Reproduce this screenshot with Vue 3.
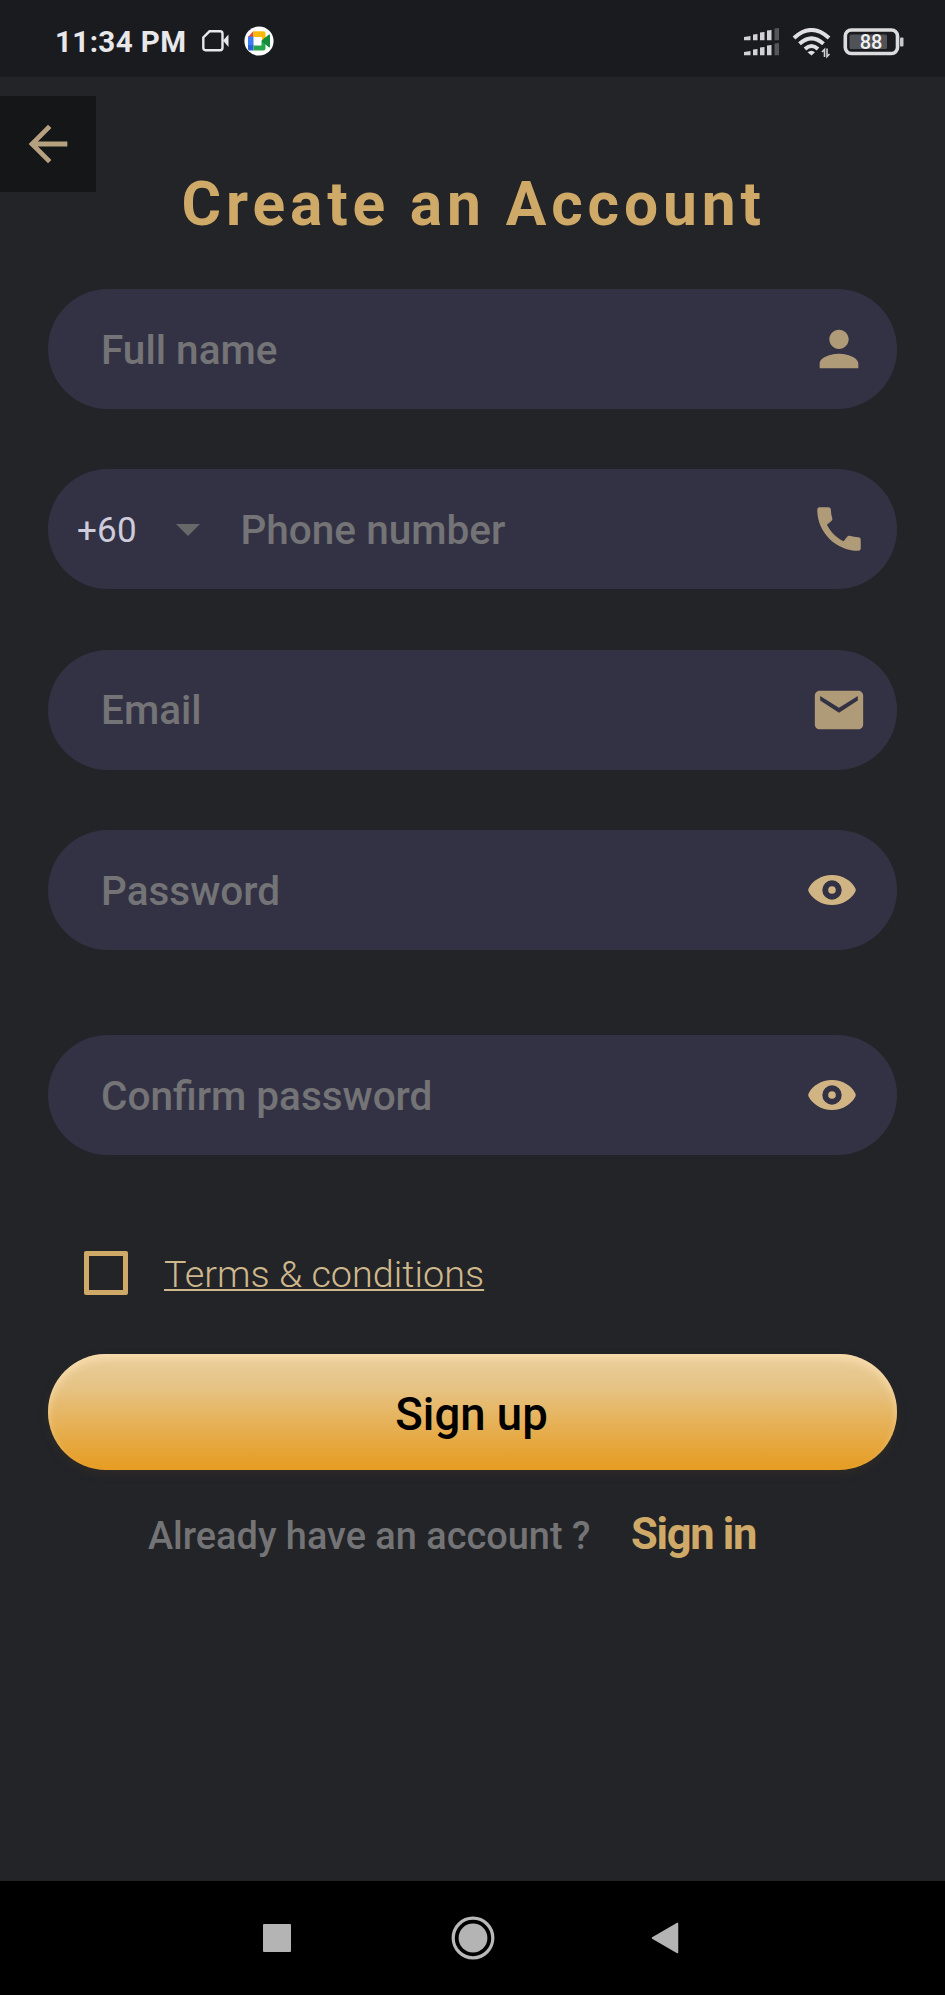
<script setup>
const fields = [
  { key: 'name', label: 'Full name', icon: 'person' },
  { key: 'phone', label: 'Phone number', icon: 'phone', prefix: '+60' },
  { key: 'email', label: 'Email', icon: 'mail' },
  { key: 'password', label: 'Password', icon: 'eye' },
  { key: 'confirm', label: 'Confirm password', icon: 'eye' },
]
const glyphs = {
  person: 'M12 12c2.21 0 4-1.79 4-4s-1.79-4-4-4-4 1.79-4 4 1.79 4 4 4zm0 2c-2.67 0-8 1.34-8 4v2h16v-2c0-2.66-5.33-4-8-4z',
  phone: 'M20.01 15.38c-1.23 0-2.42-.2-3.53-.56-.35-.12-.74-.03-1.01.24l-1.57 1.97c-2.83-1.35-5.48-3.9-6.89-6.83l1.95-1.66c.27-.28.35-.67.24-1.02-.37-1.11-.56-2.3-.56-3.53 0-.54-.45-.99-.99-.99H4.19C3.65 3 3 3.24 3 3.99 3 13.28 10.73 21 20.01 21c.71 0 .99-.63.99-1.18v-3.45c0-.54-.45-.99-.99-.99z',
  mail: 'M20 4H4c-1.1 0-2 .9-2 2v12c0 1.1.9 2 2 2h16c1.1 0 2-.9 2-2V6c0-1.1-.9-2-2-2zm-.2 4.100l-7.800 5-7.800-5V6.200l7.800 4.900 7.800-4.900z',
}
</script>

<template>
  <div class="screen">
    <header class="status">
      <span class="time">11:34 PM</span>
      <svg class="cam" width="28" height="22" viewBox="0 0 28 22">
        <path d="M7.5 1.3H18Q20.5 1.3 20.5 3.8V17.7Q20.5 20.2 18 20.2H3.5Q1.3 20.2 1.3 17.7V7.5Z" fill="none" stroke="#e8e8ea" stroke-width="2.4" />
        <path d="M21 10.5L26.5 4.5V17Z" fill="#e8e8ea" />
      </svg>
      <svg class="meet" width="30" height="30" viewBox="0 0 30 30">
        <circle cx="15" cy="15" r="14.6" fill="#fff" />
        <path d="M4 11L9.5 5V11Z" fill="#e94335" />
        <path d="M4 10.5H9.5V19.5H4Z" fill="#3b7df0" />
        <path d="M4 19H9.5V24.5H5.5Q4 24.5 4 23Z" fill="#2864d8" />
        <path d="M9.5 5.3H19.5Q21.5 5.3 21.5 7V12L18 15V11H9.5Z" fill="#fbb90b" />
        <path d="M9.5 19.5H17.5V15L21.5 11V22.5Q21.5 24.5 19.5 24.5H9.5Z" fill="#27a54c" />
        <path d="M17.5 15L24.5 8.7Q26 8 26 9.5V20.5Q26 22 24.5 21Z" fill="#138a3d" />
      </svg>
      <svg class="tray" width="165" height="32" viewBox="0 0 165 32">
        <g fill="#d2d2d4">
          <path d="M1 9L7.500 8V12.300H1ZM10 6.500L14.500 6V12.300H10ZM17 4.500L21.500 4V12.300H17ZM24 2.500L28.500 2V12.300H24Z" />
          <path d="M1 24L7.500 23V27.300H1ZM10 21.500L14.500 21V27.300H10ZM17 19.500L21.500 19V27.300H17ZM24 17.500L28.500 17V27.300H24Z" />
          <path d="M31.500 .5L36 0V12.300H31.500ZM31.500 15.500L36 15V27.300H31.500Z" fill="#55565a" />
        </g>
        <g fill="none" stroke="#e0e0e2" stroke-width="4">
          <path d="M51 10Q68.500 -6 86 10" />
          <path d="M56.500 15.800Q68.500 5 80.500 15.800" />
          <path d="M62 21Q68.500 15 75 21" />
        </g>
        <path d="M64.500 24.300Q68.500 21.300 72 24.300L68.500 27.500Z" fill="#e0e0e2" />
        <path d="M79 24L81.500 21.500V29M84 20.500V28.500L86.500 26" fill="none" stroke="#d2d2d4" stroke-width="1.600" />
        <rect x="102.300" y="2" width="52.200" height="23.500" rx="6" fill="none" stroke="#dcdcde" stroke-width="3.600" />
        <rect x="106.500" y="6.500" width="37.500" height="14.500" rx="1.500" fill="#515257" />
        <rect x="157" y="9.500" width="3.500" height="9" rx="1" fill="#c8c8ca" />
        <text x="128" y="21" text-anchor="middle" class="level">88</text>
      </svg>
    </header>

    <div class="top">
      <div class="back">
        <svg width="58" height="58" viewBox="0 0 24 24"><path d="M20 11H7.830l5.590-5.590L12 4l-8 8 8 8 1.410-1.410L7.830 13H20v-2z" fill="#b5a180" /></svg>
      </div>
      <h1 class="title">Create an Account</h1>
    </div>

    <main class="form">
      <div v-for="f in fields" :key="f.key" class="field" :class="f.key">
        <template v-if="f.prefix">
          <span class="prefix">{{ f.prefix }}</span>
          <svg class="caret" width="24" height="12" viewBox="0 0 24 12"><path d="M0 0H24L12 12Z" fill="#68686b" /></svg>
        </template>
        <span class="label">{{ f.label }}</span>
        <svg v-if="f.icon === 'eye'" class="eye" width="48" height="30" viewBox="0 0 48 30">
          <path fill-rule="evenodd" d="M24 0C13 0 4.500 6 .7 13.200Q-.2 15 .7 16.800C4.500 24 13 30 24 30S43.500 24 47.300 16.800Q48.200 15 47.300 13.200C43.500 6 35 0 24 0ZM24 5.300A9.700 9.700 0 1 1 24 24.700A9.700 9.700 0 1 1 24 5.300ZM24 11.200A3.800 3.800 0 1 0 24 18.800A3.800 3.800 0 1 0 24 11.200Z" fill="#d0b483" />
        </svg>
        <svg v-else class="icon" width="58" height="58" viewBox="0 0 24 24"><path :d="glyphs[f.icon]" fill="#b09b78" /></svg>
      </div>

      <div class="terms">
        <span class="box"></span>
        <span class="terms-text">Terms &amp; conditions</span>
      </div>

      <div class="signup"><span>Sign up</span></div>

      <div class="signin">
        <span class="question">Already have an account ?</span>
        <span class="link">Sign in</span>
      </div>
    </main>

    <nav class="nav">
      <svg class="recent" width="30" height="30" viewBox="0 0 30 30"><rect x="1" y="1" width="28" height="28" rx="1" fill="#b4b4b4" /></svg>
      <svg class="home" width="44" height="44" viewBox="0 0 44 44"><circle cx="22" cy="22" r="19.800" fill="none" stroke="#b9b9b9" stroke-width="3.200" /><circle cx="22" cy="22" r="14.400" fill="#b4b4b4" /></svg>
      <svg width="28" height="32" viewBox="0 0 28 32"><path d="M26.500 1.500V30.500L1.500 16Z" fill="#b4b4b4" stroke="#b4b4b4" stroke-linejoin="round" stroke-width="1.500" /></svg>
    </nav>
  </div>
</template>

<style>
body { background: #232428; }
</style>

<style scoped>
.screen {
  width: 945px;
  height: 1995px;
  display: flex;
  flex-direction: column;
  background: #232428;
  font-family: Roboto, "Liberation Sans", sans-serif;
  overflow: hidden;
  white-space: nowrap;
}
svg { display: block; flex: none; }
.status {
  height: 77px;
  flex: none;
  box-sizing: border-box;
  background: #1a1b1f;
  display: flex;
  align-items: flex-start;
  padding-left: 55px;
}
.time {
  width: 147px;
  margin-top: 24px;
  font-size: 29.500px;
  line-height: 36px;
  font-weight: 700;
  letter-spacing: .4px;
  color: #e8e8ea;
}
.cam { margin-top: 30px; }
.meet { margin: 26px 0 0 14px; }
.tray { margin: 28px 0 0 469px; }
.level { font: 500 20px Roboto, sans-serif; fill: #f2f2f2; }
.top {
  height: 212px;
  flex: none;
  display: flex;
  align-items: flex-start;
}
.back {
  width: 96px;
  height: 96px;
  margin-top: 19px;
  flex: none;
  background: #151617;
  display: flex;
  align-items: center;
  justify-content: center;
}
.title {
  margin: 93px 0 0 85.500px;
  font-size: 60.500px;
  line-height: 70px;
  font-weight: 700;
  letter-spacing: 4.850px;
  color: #cfa967;
}
.form { padding: 0 48px; flex: 1; }
.field {
  height: 120px;
  box-sizing: border-box;
  border-radius: 60px;
  background: #333244;
  display: flex;
  align-items: center;
  padding: 0 29px 0 53px;
  margin-bottom: 60.400px;
}
.field.phone { padding-left: 29px; }
.field.password { margin-bottom: 85px; }
.label {
  flex: 1;
  padding-top: 1px;
  font-size: 40.500px;
  line-height: 48px;
  font-weight: 500;
  color: #747477;
}
.prefix {
  width: 98.500px;
  padding-top: 3px;
  font-size: 35px;
  line-height: 42px;
  letter-spacing: .2px;
  color: #cdcbdc;
}
.caret { margin: 2px 41px 0 0; }
.eye { margin-right: 12px; }
.terms {
  height: 44px;
  display: flex;
  align-items: center;
  margin-top: 96px;
  padding-left: 36px;
}
.field.confirm { margin-bottom: 0; }
.box {
  width: 44px;
  height: 44px;
  box-sizing: border-box;
  border: 5px solid #cfa967;
  border-radius: 2px;
}
.terms-text {
  margin-left: 36px;
  padding-top: 2px;
  font-size: 37.800px;
  line-height: 44px;
  font-weight: 300;
  color: #cfb88c;
  text-decoration: underline;
  text-decoration-thickness: 2px;
  text-underline-offset: 2px;
  text-decoration-skip-ink: none;
}
.signup {
  height: 116px;
  margin-top: 58.700px;
  box-sizing: border-box;
  padding: 6px 2px 0 0;
  border-radius: 58px;
  background: linear-gradient(#e9cd9b 0%, #e6c486 28%, #e6b25a 58%, #e69c20 100%);
  box-shadow: inset 0 6px 10px -1px rgba(255, 228, 184, .7), 0 4px 8px rgba(60, 52, 38, .45);
  display: flex;
  align-items: center;
  justify-content: center;
  font-size: 45.500px;
  font-weight: 500;
  color: #000;
}
.signin {
  display: flex;
  align-items: baseline;
  margin-top: 38.800px;
  padding-left: 100px;
}
.question {
  width: 483px;
  font-size: 37.900px;
  font-weight: 500;
  color: #747477;
}
.link {
  font-size: 43.500px;
  line-height: 52px;
  font-weight: 700;
  letter-spacing: -1.300px;
  color: #cfa967;
}
.nav {
  height: 114px;
  flex: none;
  box-sizing: border-box;
  background: #000;
  display: flex;
  align-items: center;
  padding-left: 261.500px;
}
.recent { margin-right: 159.500px; }
.home { margin-right: 156px; }
</style>
